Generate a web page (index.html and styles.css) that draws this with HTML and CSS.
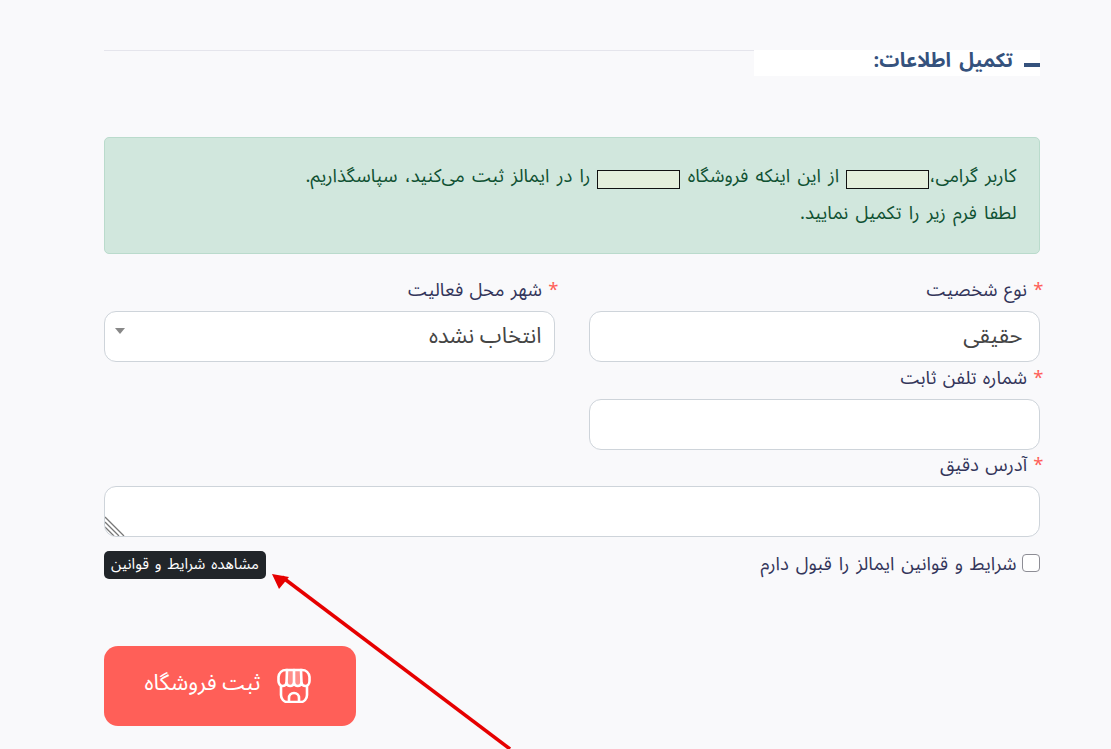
FILE: index.html
```html
<!DOCTYPE html>
<html lang="fa" dir="rtl">
<head>
<meta charset="utf-8">
<title>تکمیل اطلاعات</title>
<link rel="stylesheet" href="styles.css">
</head>
<body>
<main class="page">
  <header class="section-head">
    <h2 class="section-title"><span class="dash"></span><span class="title-text">تکمیل اطلاعات:</span></h2>
    <div class="section-line"></div>
  </header>
  <div class="alert">
    <p>کاربر گرامی،<span class="mask"></span> از این اینکه فروشگاه <span class="mask"></span> را در ایمالز ثبت می‌کنید، سپاسگذاریم.</p>
    <p>لطفا فرم زیر را تکمیل نمایید.</p>
  </div>
  <form class="form">
    <div class="row">
      <div class="field">
        <label class="label"><span class="star">*</span> نوع شخصیت</label>
        <div class="control">حقیقی</div>
      </div>
      <div class="field">
        <label class="label"><span class="star">*</span> شهر محل فعالیت</label>
        <div class="control select">انتخاب نشده<span class="caret"></span></div>
      </div>
    </div>
    <div class="row">
      <div class="field">
        <label class="label"><span class="star">*</span> شماره تلفن ثابت</label>
        <div class="control"></div>
      </div>
    </div>
    <div class="field">
      <label class="label"><span class="star">*</span> آدرس دقیق</label>
      <div class="control area">
        <svg class="grip" width="20" height="20" viewBox="0 0 20 20"><path d="M0 1L19 20M0 6L14 20M0 11L9 20M0 16L4 20" stroke="#777" stroke-width="1.3" fill="none"/></svg>
      </div>
    </div>
    <div class="terms">
      <label class="check"><span class="box"></span>شرایط و قوانین ایمالز را قبول دارم</label>
      <a class="terms-link">مشاهده شرایط و قوانین</a>
    </div>
    <div class="actions">
      <button type="button" class="submit">
        <svg width="34" height="35" viewBox="0 0 34 35" fill="none" stroke="#fff" stroke-width="2.6" stroke-linejoin="round" stroke-linecap="round">
          <path d="M10 2h14l1 13c-1 2-3 3-5 3h-6c-2 0-4-1-5-3z" fill="#fff" fill-opacity=".3" stroke="none"/>
          <path d="M9 2h16c4 0 7 3 7.500 7v4c0 3-2 5-4 5s-3.500-1-4-3c-.5 2-2 3-3.700 3s-3.300-1-3.800-3c-.5 2-2 3-3.800 3s-3.200-1-3.700-3c-.5 2-2 3-4 3s-4-2-4-5V9C2 5 5 2 9 2z"/>
          <path d="M10 2L9.500 15M17 2v13M24 2l.5 13"/>
          <path d="M4 18v9c0 4 3 7 6 7h14c3 0 6-3 6-7v-9"/>
          <path d="M12 34v-4c0-3 2-5 5-5s5 2 5 5v4"/>
        </svg>
        <span class="submit-text">ثبت فروشگاه</span>
      </button>
    </div>
  </form>
</main>
<svg class="arrow" width="1111" height="749" viewBox="0 0 1111 749">
  <path d="M510 749L282 577" stroke="#e60000" stroke-width="3.500" fill="none"/>
  <path d="M272 574L289 577L279 589z" fill="#e60000"/>
</svg>
</body>
</html>
```
FILE: styles.css
```css
* { box-sizing: border-box; }
html, body { margin: 0; height: 749px; overflow: hidden; }
body {
  background: #f9f9fb;
  font-family: "Noto Sans Arabic", "DejaVu Sans", "Noto Sans", sans-serif;
  color: #33355a;
}
.page {
  width: 935.5px;
  padding-top: 50px;
  margin-right: 71.5px;
}
.section-head { display: flex; align-items: flex-start; height: 87px; }
.section-title {
  width: 286px;
  height: 26px;
  margin: 0 -0.5px 0 0;
  background: #fff;
  color: #35527d;
  font-size: 20px;
  font-weight: 700;
  word-spacing: 3px;
  line-height: 23px;
  display: flex;
  align-items: center;
}
.title-text { margin-top: -3px; }
.dash { width: 16px; height: 4px; background: #35527d; margin-left: 11px; margin-top: 3px; }
.section-line { flex: 1; height: 1px; background: #e5e5ec; }
.alert {
  height: 117px;
  padding: 20px 22px 0;
  background: #d1e7dd;
  border: 1px solid #badbcc;
  border-radius: 5px;
  color: #0f5132;
  font-size: 18.5px;
  word-spacing: 2.4px;
  line-height: 37px;
}
.alert p { margin: 0; }
.mask {
  display: inline-block;
  width: 83px;
  height: 19px;
  background: #e4efdc;
  border: 1px solid #111;
  vertical-align: -7px;
}
.form { padding-top: 24px; }
.row { display: flex; gap: 34.5px; }
.row .field { width: 450.5px; }
.label { display: block; height: 33px; margin-right: -4px; padding-top: 1px; font-size: 18.5px; word-spacing: 1.5px; line-height: 24px; }
.star { color: #ff5f58; }
.control {
  position: relative;
  height: 51px;
  background: #fff;
  border: 1px solid #ced4da;
  border-radius: 12px;
  padding: 0 16px;
  font-size: 22px;
  line-height: 49px;
  color: #444;
}
.select { padding: 0 12px; }
.row + .row { margin-top: 4px; }
.row + .field { margin-top: 3px; }
.caret {
  position: absolute;
  left: 10px;
  top: 16px;
  border: 5px solid transparent;
  border-top: 6px solid #888;
  border-bottom: 0;
}
.area { overflow: hidden; }
.grip { position: absolute; left: 0; bottom: 0; }
.terms { display: flex; justify-content: space-between; align-items: center; margin-top: 14px; height: 28px; }
.check { display: flex; align-items: center; gap: 5px; margin-top: -2px; font-size: 18.5px; word-spacing: 2px; }
.box { width: 18px; height: 18px; margin-top: -2px; background: #fff; border: 1px solid #8d8d95; border-radius: 4px; }
.terms-link {
  background: #212529;
  color: #fff;
  font-size: 15px;
  word-spacing: 2px;
  line-height: 26px;
  height: 28px;
  padding: 0 7px;
  border-radius: 5px;
}
.actions { margin-top: 67px; display: flex; justify-content: flex-end; }
.submit {
  width: 252px;
  height: 80px;
  display: flex;
  align-items: center;
  justify-content: center;
  gap: 16px;
  padding: 0 5px 2px 0;
  background: #ff5f58;
  color: #fff;
  border: 0;
  border-radius: 14px;
  font-family: inherit;
  font-size: 22px;
}
.submit-text { margin-top: -4px; }
.arrow { position: absolute; left: 0; top: 0; pointer-events: none; }
```
